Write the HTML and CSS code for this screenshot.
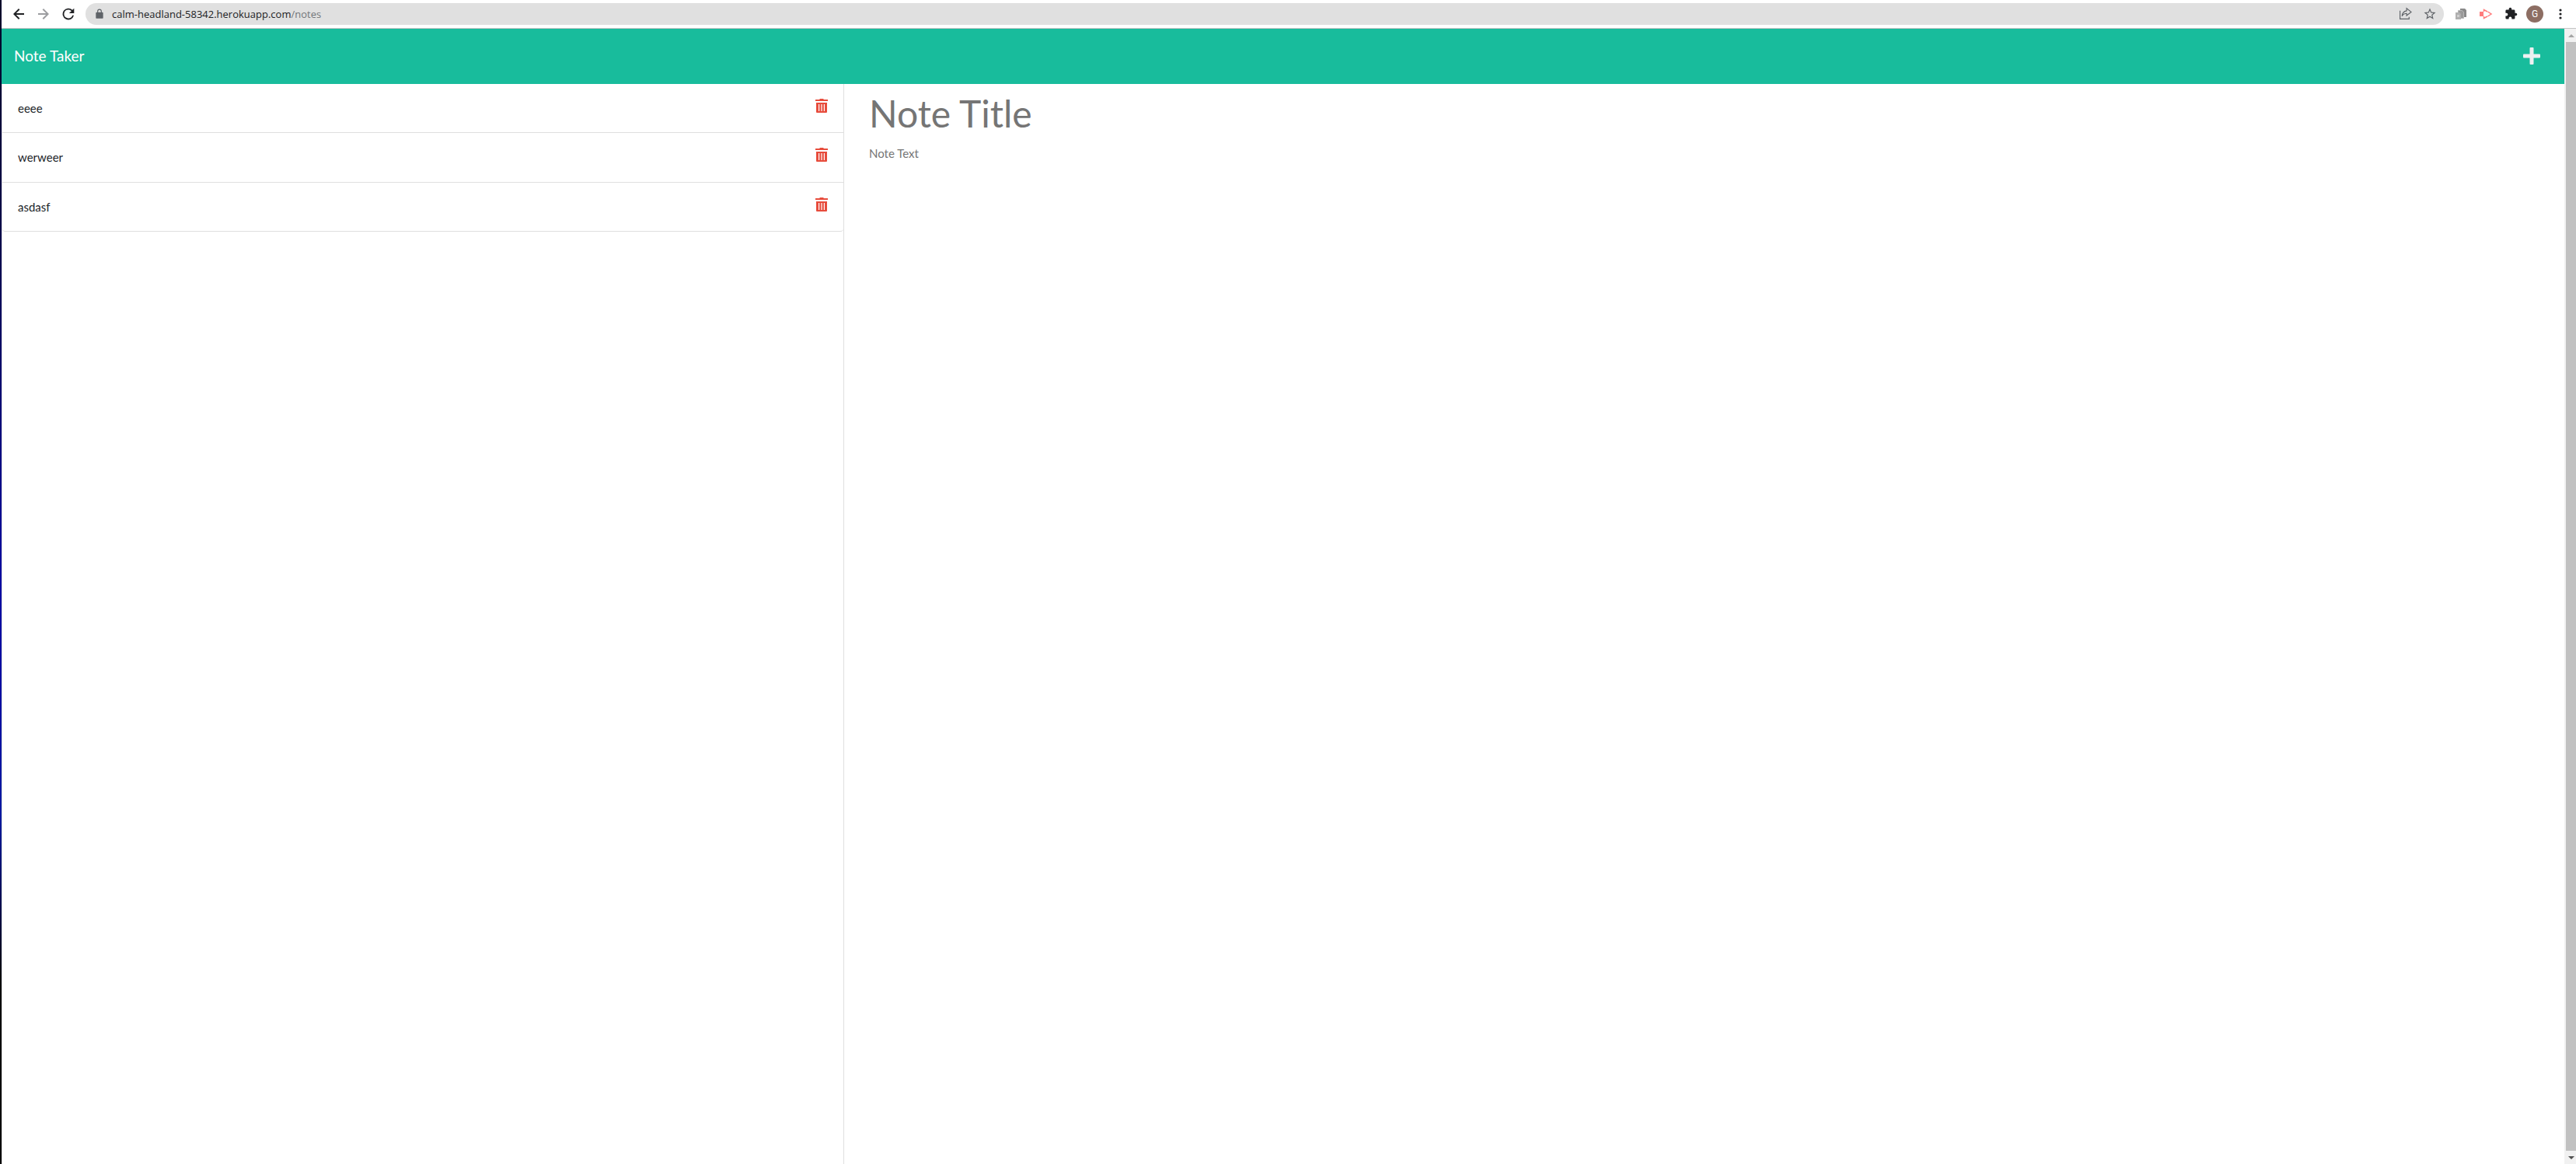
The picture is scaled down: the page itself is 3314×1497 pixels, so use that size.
FILE: index.html
```html
<!DOCTYPE html>
<html lang="en">
<head>
<meta charset="utf-8">
<title>Note Taker</title>
<link rel="stylesheet" href="styles.css">
</head>
<body>
<div class="desktop">
  <div class="window">
    <div class="toolbar">
      <button class="tool" aria-label="Back"><svg width="24" height="24" viewBox="0 0 24 24"><path d="M19 11v2H8.800l4.600 4.600-1.400 1.400-7-7 7-7 1.400 1.400L8.800 11z"/></svg></button>
      <button class="tool tool-off" aria-label="Forward"><svg width="24" height="24" viewBox="0 0 24 24"><path d="M5 11v2h10.200l-4.600 4.600 1.400 1.400 7-7-7-7-1.400 1.400 4.600 4.600z"/></svg></button>
      <button class="tool" aria-label="Reload"><svg width="22" height="22" viewBox="0 0 24 24"><path d="M17.600 6.400A8 8 0 1 0 19.700 14h-2.100A6 6 0 1 1 12 6c1.700 0 3.100.7 4.200 1.800L13 11h7V4z"/></svg></button>
      <div class="address">
        <svg class="lock" width="14" height="14" viewBox="0 0 24 24"><path d="M18 8h-1V6A5 5 0 0 0 7 6v2H6a2 2 0 0 0-2 2v10a2 2 0 0 0 2 2h12a2 2 0 0 0 2-2V10a2 2 0 0 0-2-2zM9 6a3 3 0 0 1 6 0v2H9z"/></svg>
        <span class="url">calm-headland-58342.herokuapp.com<span class="path">/notes</span></span>
        <button class="chip" aria-label="Share"><svg width="17" height="17" viewBox="0 0 16 16" fill="none" stroke="#5f6368" stroke-width="1.100"><path d="M1.500 4.500v10h11V12M9.500 1.700l5.500 4.300-5.500 4.300V7.800C7 7.800 5.200 8.800 4 11c.3-3.500 2.500-6 5.500-6.400z"/></svg></button>
        <button class="chip" aria-label="Bookmark"><svg width="18" height="18" viewBox="0 0 24 24" fill="#5f6368"><path d="M22 9.240l-7.190-.62L12 2 9.190 8.630 2 9.240l5.460 4.730L5.820 21 12 17.270 18.180 21l-1.630-7.030zM12 15.400l-3.760 2.270 1-4.280-3.320-2.880 4.380-.38L12 6.100l1.710 4.040 4.380.38-3.320 2.880 1 4.280z"/></svg></button>
      </div>
      <button class="ext" aria-label="Copy pages"><svg width="16" height="16" viewBox="0 0 16 16"><path fill="#8a8a8a" d="M7 1h6l2 2v9H7z"/><path fill="#9a9a9a" stroke="#b8b8b8" d="M4.500 3.500h5l2 2v8h-7z"/><path fill="#b0b0b0" d="M1 6h5l2 2v7H1z"/><path fill="#cfcfcf" d="M3 9h3v3H3z"/></svg></button>
      <button class="ext" aria-label="Recorder"><svg width="18" height="18" viewBox="0 0 18 18"><path fill="#ff7b7b" d="M1 6h5v6H1z"/><path fill="none" stroke="#ff7b7b" stroke-width="1.500" d="M6.500 6V3.500L11 6M6.500 12v2.500L11 12M11.500 6 16 9l-4.500 3"/></svg></button>
      <button class="ext" aria-label="Extensions"><svg width="17" height="17" viewBox="0 0 24 24" fill="#202124"><path d="M20.500 11H19V7a2 2 0 0 0-2-2h-4V3.500a2.500 2.500 0 0 0-5 0V5H4a2 2 0 0 0-2 2v3.800h1.500a2.700 2.700 0 0 1 0 5.400H2V20a2 2 0 0 0 2 2h3.800v-1.500a2.700 2.700 0 0 1 5.400 0V22H17a2 2 0 0 0 2-2v-4h1.500a2.500 2.500 0 0 0 0-5z"/></svg></button>
      <button class="avatar" aria-label="Profile">G</button>
      <button class="more" aria-label="Menu"><svg width="4" height="14" viewBox="0 0 4 14" fill="#202124"><circle cx="2" cy="2" r="1.600"/><circle cx="2" cy="7" r="1.600"/><circle cx="2" cy="12" r="1.600"/></svg></button>
    </div>
    <div class="viewport">
      <div class="page">
        <header class="navbar">
          <a class="brand" href="#">Note Taker</a>
          <button class="add" aria-label="New note"><svg width="22" height="22" viewBox="0 0 22 22" fill="#ecf0f1"><path d="M9.500 0h3a1 1 0 0 1 1 1v7.500H21a1 1 0 0 1 1 1v3a1 1 0 0 1-1 1h-7.500V21a1 1 0 0 1-1 1h-3a1 1 0 0 1-1-1v-7.500H1a1 1 0 0 1-1-1v-3a1 1 0 0 1 1-1h7.500V1a1 1 0 0 1 1-1z"/></svg></button>
        </header>
        <main class="content">
          <nav class="sidebar">
            <ul class="notes">
              <li class="note"><a href="#">eeee</a><button class="delete" aria-label="Delete eeee"><svg width="16" height="18" viewBox="0 0 16 18"><path fill-rule="evenodd" d="M5.500 0h5v1H16v2H0V1h5.500zM1 5h14v12a1 1 0 0 1-1 1H2a1 1 0 0 1-1-1zM4 7v9h1.200V7zm3.400 0v9h1.200V7zM10.800 7v9H12V7z"/></svg></button></li>
              <li class="note"><a href="#">werweer</a><button class="delete" aria-label="Delete werweer"><svg width="16" height="18" viewBox="0 0 16 18"><path fill-rule="evenodd" d="M5.500 0h5v1H16v2H0V1h5.500zM1 5h14v12a1 1 0 0 1-1 1H2a1 1 0 0 1-1-1zM4 7v9h1.200V7zm3.400 0v9h1.200V7zM10.800 7v9H12V7z"/></svg></button></li>
              <li class="note"><a href="#">asdasf</a><button class="delete" aria-label="Delete asdasf"><svg width="16" height="18" viewBox="0 0 16 18"><path fill-rule="evenodd" d="M5.500 0h5v1H16v2H0V1h5.500zM1 5h14v12a1 1 0 0 1-1 1H2a1 1 0 0 1-1-1zM4 7v9h1.200V7zm3.400 0v9h1.200V7zM10.800 7v9H12V7z"/></svg></button></li>
            </ul>
          </nav>
          <section class="editor">
            <input class="title" type="text" placeholder="Note Title" aria-label="Note title">
            <textarea class="text" placeholder="Note Text" aria-label="Note text"></textarea>
          </section>
        </main>
      </div>
      <div class="scrollbar">
        <svg class="arrow" width="8" height="4" viewBox="0 0 8 4" fill="#a3a3a3"><path d="M0 4 4 0l4 4z"/></svg>
        <div class="thumb"></div>
        <svg class="arrow" width="8" height="4" viewBox="0 0 8 4" fill="#505050"><path d="M0 0h8L4 4z"/></svg>
      </div>
    </div>
  </div>
</div>
</body>
</html>
```
FILE: styles.css
```css
* { box-sizing: border-box; }
body { margin: 0; background: #fff; color: #212529; font: 15px/24px Lato, sans-serif; }
button { display: flex; align-items: center; justify-content: center; margin: 0; padding: 0; border: 0; background: none; }
svg { display: block; }
a { color: inherit; text-decoration: none; }

.desktop { display: flex; min-height: 100vh; padding-left: 2px; background: linear-gradient(#000028, #000048 20%, #0000a0 50%, #0018a0 70%, #000 85%); }
.window { flex: 1; display: flex; flex-direction: column; background: #fff; }

.toolbar { display: flex; align-items: center; height: 37px; padding: 0 18px 1px 6px; border-bottom: 1px solid #c4c4c4; }
.tool { width: 32px; height: 28px; fill: #202124; }
.tool-off { fill: #9c9da0; }
.address { flex: 1; display: flex; align-items: center; height: 28px; margin: 0 6px; padding: 0 8px 0 11px; border-radius: 14px; background: #e0e0e0; }
.lock { fill: #5f6368; }
.url { flex: 1; margin-left: 9px; color: #202124; font: 13px/20px "Open Sans", sans-serif; }
.path { color: #73767a; }
.chip { width: 32px; height: 28px; }
.chip:last-child { width: 20px; margin-left: 6px; }
.ext { width: 32px; height: 28px; }
.avatar { width: 22px; height: 22px; margin: 0 20px 0 4px; border-radius: 50%; background: #8d6e63; color: #fff; font: 12px/22px Roboto, sans-serif; }
.more { width: 4px; height: 28px; }

.viewport { flex: 1; display: flex; }
.page { flex: 1; display: flex; flex-direction: column; }
.navbar { display: flex; align-items: center; justify-content: space-between; height: 71px; padding: 0 31px 2px 16px; background: #18bc9c; }
.brand { color: #fff; font-size: 19px; line-height: 28px; }
.content { flex: 1; display: grid; grid-template-columns: 1fr 2fr; gap: 30px; padding-right: 15px; }

.sidebar { border: 1px solid #dfdfdf; border-width: 0 1px; }
.notes { margin: 0; padding: 0; list-style: none; }
.note { display: flex; justify-content: space-between; align-items: flex-start; height: 64px; padding: 19px 20px 0; border-bottom: 1px solid #dfdfdf; }
.note:first-child, .note:last-child { height: 63px; }
.note:last-child { border-radius: 0 0 4px 4px; }
.delete { fill: #e74c3c; }

.editor { display: flex; flex-direction: column; }
.editor input, .editor textarea { width: 100%; padding: 2px; border: 0; outline: 0; background: none; color: #212529; font-family: Lato, sans-serif; }
.editor ::placeholder { color: #757575; opacity: 1; }
.title { height: 62px; margin-top: 6px; font-size: 48px; }
.text { flex: 1; margin-top: 8px; font-size: 15px; line-height: 22px; resize: none; }

.scrollbar { display: flex; flex-direction: column; width: 15px; background: #f1f1f1; }
.arrow { margin: 7px 0 6px 5px; }
.thumb { flex: 1; margin-left: 2px; background: #c1c1c1; }
```
